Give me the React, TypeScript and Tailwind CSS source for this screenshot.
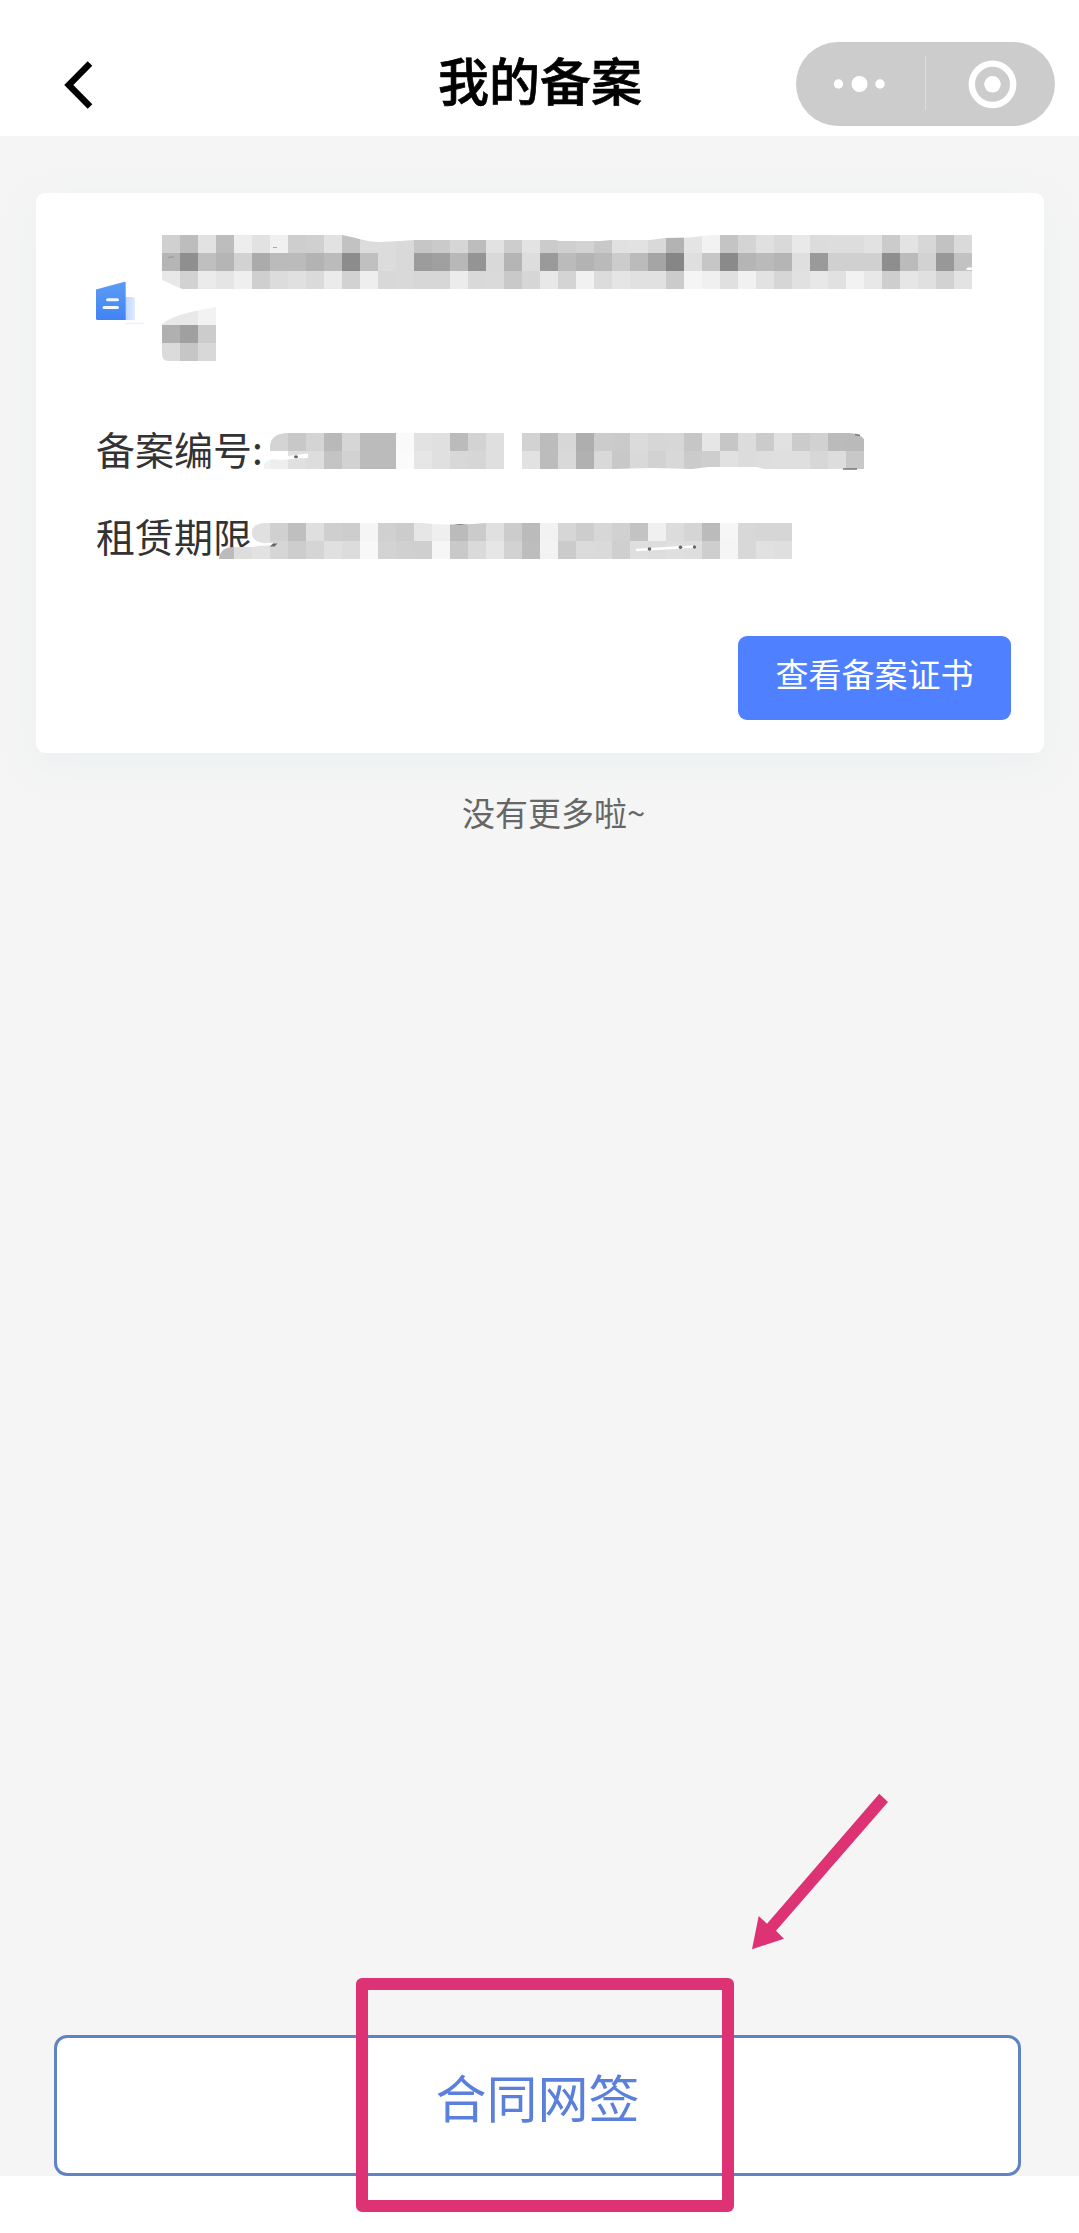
import { ReactNode } from "react";

const CELL = 18;

interface MosaicProps {
  id: string;
  rows: string[];
  clip: string;
  width: number;
  height: number;
  className?: string;
  children?: ReactNode;
}

// Every row is a list of two-digit grey levels, ".." leaves the cell empty
function Mosaic({ id, rows, clip, width, height, className, children }: MosaicProps) {
  return (
    <svg
      className={className}
      width={width}
      height={height}
      viewBox={`0 0 ${width} ${height}`}
      shapeRendering="crispEdges"
    >
      <clipPath id={id}>
        <path d={clip} />
      </clipPath>
      <g clipPath={`url(#${id})`}>
        {rows.map((row, y) =>
          row.split(" ").map((level, x) =>
            level === ".." ? null : (
              <rect
                key={`${x}-${y}`}
                x={x * CELL}
                y={y * CELL}
                width={CELL}
                height={CELL}
                fill={`#${level}${level}${level}`}
              />
            )
          )
        )}
      </g>
      <g shapeRendering="auto">{children}</g>
    </svg>
  );
}

const NAME_ROWS = [
  "d0 bd e2 bd ed e2 f0 ce d0 e2 c2 dc dc d9 c6 ca d6 bd e2 cd e3 cb cf d3 c8 e1 e2 d9 b3 e4 f2 c4 d4 e0 d9 e9 dc dd dd e2 cb e3 d7 c2 da",
  "b5 8f bf b5 d2 ab bb bb b3 bb 8c c0 dc d9 9c a0 b8 94 d9 b5 dd 9a bb b3 ba cc bb a5 86 df c6 8a b5 ba b5 df 9a d0 d0 d0 8e bb d2 98 c2",
  "e8 d2 eb e5 ef cf dc e0 da eb d2 ee d8 d9 d7 d7 ec d9 da c9 d6 e8 d4 f1 dc e5 e1 e1 cb f5 f0 e0 f1 e2 d6 e1 e8 e1 f2 e8 ce e6 e0 d2 e3",
];

const NAME_TAIL_ROWS = ["e8 e8 f2", "b0 a0 cc", "db c6 d8"];

const NUMBER_ROWS = [
  ".. d4 c8 d4 b9 d6 bb bb fa e2 e0 bb d3 df .. d2 bc d7 ae cc ca db d6 d7 c6 e6 c6 dc cb e1 cb d1 bb ba",
  "f2 ee e0 dd c4 d2 bb bb fb e6 e0 d8 d6 df .. e2 bc d9 b1 d9 c8 d9 d2 d8 cb ce e1 dc de df df d7 dd c8",
];

const TERM_ROWS = [
  ".. .. e0 d0 bf df cf cd f5 d0 cc e6 ef bb cb e0 cc bb f2 d6 cd d7 d1 c3 f0 dc d5 bb f6 d8 d6 d6",
  "bb dd e2 d6 cd d5 e0 dc f8 d3 d0 cf f6 c9 da e6 d2 bd f3 cb db da cf df dd df de ce f5 d8 e1 df",
];

function NavBar() {
  return (
    <header className="flex h-[136px] items-start bg-white pt-[42px] pr-[24px] pl-[64px]">
      <svg className="mt-[18px]" width="30" height="50" viewBox="0 0 30 50">
        <path d="M26 3.500 4.800 25 26 46.500" fill="none" stroke="#000" strokeWidth="6.500" />
      </svg>
      <h1 className="ml-[344px] h-[84px] w-[204px] text-[51px] leading-[74px] font-medium whitespace-nowrap text-black [-webkit-text-stroke:0.7px_#000]">
        我的备案
      </h1>
      <div className="ml-auto flex h-[84px] w-[259px] items-center rounded-full bg-[#ccc]">
        <svg width="258" height="84" viewBox="0 0 258 84" fill="#fff">
          <circle cx="42.500" cy="42" r="4.700" />
          <circle cx="63.500" cy="42" r="8" />
          <circle cx="84" cy="42" r="4.700" />
          <rect x="129" y="14" width="1" height="54" fill="#dcdcdc" />
          <circle cx="196.500" cy="42.300" r="20.700" fill="none" stroke="#fff" strokeWidth="6.400" />
          <circle cx="196.500" cy="42.300" r="8.300" />
        </svg>
      </div>
    </header>
  );
}

function BuildingIcon() {
  return (
    <svg width="48" height="45" viewBox="0 0 48 45">
      <defs>
        <linearGradient id="tower" x1="0" y1="0" x2="0" y2="1">
          <stop offset="0" stopColor="#5b9cf5" />
          <stop offset="1" stopColor="#4283f4" />
        </linearGradient>
        <linearGradient id="annex" x1="0" y1="0" x2="1" y2="0">
          <stop offset="0" stopColor="#bdd5fb" />
          <stop offset="1" stopColor="#e0ecff" />
        </linearGradient>
      </defs>
      <path d="M29 17h7.500q2.500 0 2.500 2.500V40H29z" fill="url(#annex)" />
      <path d="M0 9.500 28.500 1.700q1.200-.2 1.200 1V40H1.500Q0 40 0 38.500z" fill="url(#tower)" />
      <path d="M11.500 19.700h10M8 27.400h13.500" stroke="#f1f7ff" strokeWidth="3" strokeLinecap="round" />
      <path d="M29 43.500h19" stroke="#e9f1fd" strokeWidth="1.500" />
    </svg>
  );
}

function RecordCard() {
  return (
    <section className="mx-[36px] mt-[57px] h-[560px] w-[1008px] rounded-[9px] bg-white pt-[42px] pr-[33px] pl-[60px] shadow-[0_12px_36px_rgba(215,228,232,0.3)]">
      <div className="flex h-[126px] items-start">
        <div className="mt-[45px] w-[66px]">
          <BuildingIcon />
        </div>
        <div className="flex flex-col gap-[18px]">
          <Mosaic
            id="name"
            rows={NAME_ROWS}
            width={810}
            height={54}
            clip="M0 0H180C193 2 203 7 218 7L238 6 253 5H393L398 6H438L450 5H488L503 3 528 2.500 550 0H810V54H20L0 45z"
          >
            <path d="M804 34l2-1.500h4v2.500h-5z" fill="#fff" />
            <path d="M6 23l2-1h4M111 12.500h4" fill="none" stroke="#888" strokeWidth="0.700" />
          </Mosaic>
          <Mosaic
            id="name-tail"
            rows={NAME_TAIL_ROWS}
            width={54}
            height={54}
            clip="M0 17Q8 10 29 5L54 0V54H6Q0 54 0 47z"
          />
        </div>
      </div>

      <div className="mt-[45px] flex h-[90px] items-center">
        <span className="mb-[7px] w-[156px] text-[39px] leading-[56px] whitespace-nowrap text-[#333]">
          备案编号:
        </span>
        <Mosaic
          id="number"
          className="mt-[2px]"
          rows={NUMBER_ROWS}
          width={612}
          height={38}
          clip="M18 18V13Q19 1 34 0H598Q608 1 612 6V36H512L505 34H456L440 36 400 35 360 36H12V31Q16 25 36 24V18z"
        >
          <path d="M18 18H36V23L56 20.500V25L44 25.500 30 27 18 26z" fill="#fff" />
          <ellipse cx="44" cy="23.700" rx="2" ry="1.500" fill="#666" />
          <path d="M603 1.500l5 1M591 36h14" fill="none" stroke="#777" strokeWidth="1.500" />
        </Mosaic>
      </div>
      <div className="flex h-[90px] items-center">
        <span className="mb-[12px] w-[156px] text-[39px] leading-[56px] whitespace-nowrap text-[#333]">
          租赁期限
        </span>
        <Mosaic
          id="term"
          className="-ml-[36px]"
          rows={TERM_ROWS}
          width={576}
          height={36}
          clip="M35 12Q35 1 48 0H206Q234 3 270 0H576V36H3Q4 24 18 24H36L48 22Q36 20 35 12z"
        >
          <path d="M34.500 8Q34 20 48 21.500L57 21" fill="none" stroke="#fff" strokeWidth="2.500" />
          <path d="M54 23.500l3-3h4.500l-3 3z" fill="#666" />
          <path d="M238 2q6-1.500 12 0z" fill="#666" />
          <path d="M420 27l60-3.500" stroke="#fff" strokeWidth="2.500" />
          <g fill="#666">
            <circle cx="433.500" cy="26" r="1.800" />
            <circle cx="464.500" cy="24.300" r="1.800" />
            <circle cx="478.500" cy="24" r="1.700" />
          </g>
        </Mosaic>
      </div>

      <div className="mt-[50px] flex justify-end">
        <button className="h-[84px] w-[273px] rounded-[9px] bg-[#4f80ff] pb-[9px] text-[33px] leading-[75px] text-white">
          查看备案证书
        </button>
      </div>
    </section>
  );
}

function PinkArrow() {
  return (
    <svg
      className="absolute top-[1790px] left-[750px]"
      width="142"
      height="162"
      viewBox="750 1790 142 162"
    >
      <path
        d="M879.300 1793.700 888 1802 776 1930.700 784 1938.700 752 1949.300 758.700 1916 767 1923.700z"
        fill="#dd3375"
      />
    </svg>
  );
}

export default function App() {
  return (
    <div className="relative flex h-[2233px] w-[1079px] flex-col overflow-hidden bg-white font-['Noto_Sans_CJK_SC',sans-serif]">
      <NavBar />
      <main className="flex h-[2040px] flex-col bg-[#f5f5f5]">
        <RecordCard />
        <p className="mt-[31px] ml-[462px] text-[33px] leading-[56px] text-[#666]">没有更多啦~</p>
        <button className="mt-auto ml-[54px] h-[141px] w-[967px] rounded-[13px] border-[3px] border-[#6083c4] bg-white pb-[18px] text-[51px] text-[#5b80dc]">
          合同网签
        </button>
      </main>

      {/* Highlight over the sign button */}
      <div className="absolute top-[1978px] left-[356px] h-[234px] w-[378px] rounded-[6px] border-[12px] border-[#dd3375]" />
      <PinkArrow />
    </div>
  );
}
